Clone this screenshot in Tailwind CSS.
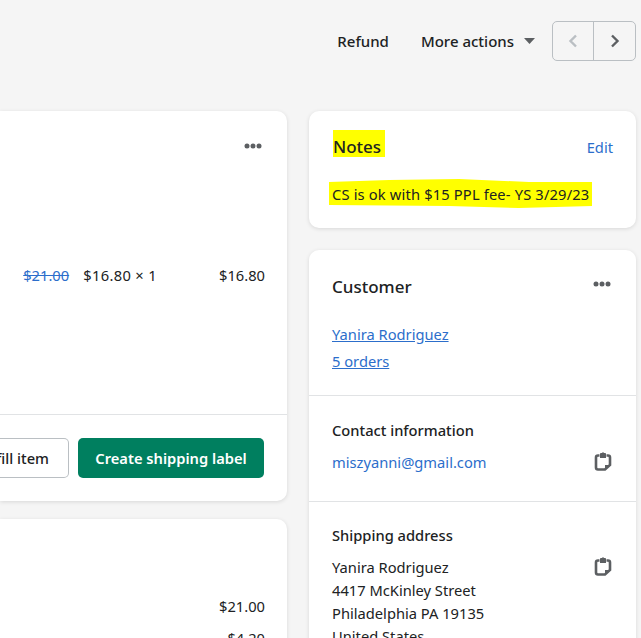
<!DOCTYPE html>
<html lang="en">
<head>
  <meta charset="UTF-8" />
  <title>Order</title>
  <script src="https://cdn.jsdelivr.net/npm/@tailwindcss/browser@4"></script>
</head>
<body class="bg-[#f5f5f5] h-[638px] w-[641px] overflow-hidden font-['Noto_Sans','Open_Sans',sans-serif] text-[14.7px] text-[#202223]">

  <!-- top actions -->
  <div class="h-[111px] flex justify-end items-start pt-[21px] pr-[5px] text-[15px]">
    <span class="h-10 flex items-center font-medium mr-8">Refund</span>
    <span class="h-10 flex items-center font-medium">More actions
      <svg class="ml-[10px] mr-[17px]" width="11" height="6" viewBox="0 0 11 6"><path d="M0 0h11L5.500 6z" fill="#5c5f62"/></svg>
    </span>
    <div class="h-10 w-[84px] flex border border-[#babfc3] rounded-[5px]">
      <span class="w-[41px] flex items-center justify-center border-r border-[#babfc3]">
        <svg width="10" height="14" viewBox="0 0 10 14"><path d="M8 1.5 2.500 7 8 12.500" fill="none" stroke="#babfc3" stroke-width="2.400"/></svg>
      </span>
      <span class="flex-1 flex items-center justify-center">
        <svg width="10" height="14" viewBox="0 0 10 14"><path d="M2 1.5 7.500 7 2 12.500" fill="none" stroke="#5c5f62" stroke-width="2.400"/></svg>
      </span>
    </div>
  </div>

  <div class="flex gap-[22px] items-start">
    <!-- left column -->
    <div class="w-[287px] flex flex-col gap-[18px]">
      <div class="h-[390px] bg-white rounded-r-[10px] shadow-[0_1px_4px_rgba(0,0,0,0.12)] flex flex-col">
        <div class="h-[303px] pr-[22px]">
          <div class="h-[70px] flex justify-end items-start pt-[32px] pr-[3px]">
            <svg width="18" height="6" viewBox="0 0 18 6" fill="#5c5f62"><circle cx="3" cy="3" r="2.500"/><circle cx="9" cy="3" r="2.500"/><circle cx="15" cy="3" r="2.500"/></svg>
          </div>
          <div class="mt-[82px] flex justify-end items-center h-6">
            <span class="text-[#2c6ecb] line-through mr-[14px]">$21.00</span>
            <span class="mr-[62px] tracking-[0.35px]">$16.80 × 1</span>
            <span>$16.80</span>
          </div>
        </div>
        <div class="flex-1 border-t border-[#e1e3e5] flex justify-end items-start gap-[9px] pt-[23px] pr-[23px]">
          <span class="h-10 w-[69px] shrink-0 flex items-center justify-end pr-[19px] bg-white border border-[#babfc3] border-l-0 rounded-r-[5px] font-medium whitespace-nowrap overflow-hidden">Fulfill item</span>
          <span class="h-10 w-[186px] shrink-0 flex items-center justify-center bg-[#007f5f] text-white rounded-[5px] font-semibold">Create shipping label</span>
        </div>
      </div>
      <div class="h-[200px] bg-white rounded-r-[10px] shadow-[0_1px_4px_rgba(0,0,0,0.12)] pr-[22px] pt-[75px] text-right">
        <p class="leading-6">$21.00</p>
        <p class="leading-6 mt-[8px]">$4.20</p>
      </div>
    </div>

    <!-- right column -->
    <div class="w-[327px] flex flex-col gap-[22px]">
      <div class="h-[117px] bg-white rounded-[10px] shadow-[0_1px_4px_rgba(0,0,0,0.12)] pl-[20px] pr-[23px] pt-[19px]">
        <div class="flex justify-between items-start h-[29px]">
          <span class="ml-[4px] w-[52px] bg-[#ffff00] text-[17px] font-medium h-[27px] leading-[34px] whitespace-nowrap overflow-hidden">Notes</span>
          <span class="text-[#2c6ecb] mt-[5px] leading-6">Edit</span>
        </div>
        <p class="mt-[19px] w-[263px] bg-[#ffff00] h-[31px] leading-[32px] pl-[3px] tracking-[0.16px] whitespace-nowrap [clip-path:polygon(0_4px,60px_2px,130px_1px,200px_4px,263px_4px,263px_28px,190px_30px,120px_28px,0_27px)]">CS is ok with $15 PPL fee- YS 3/29/23</p>
      </div>

      <div class="h-[400px] bg-white rounded-[10px] shadow-[0_1px_4px_rgba(0,0,0,0.12)]">
        <div class="h-[146px] border-b border-[#e1e3e5] pl-[23px] pr-[25px] pt-[25px]">
          <div class="flex justify-between items-start">
            <span class="text-[17px] font-medium leading-6">Customer</span>
            <svg class="mt-[6px]" width="18" height="6" viewBox="0 0 18 6" fill="#5c5f62"><circle cx="3" cy="3" r="2.500"/><circle cx="9" cy="3" r="2.500"/><circle cx="15" cy="3" r="2.500"/></svg>
          </div>
          <a class="block mt-[23px] leading-6 text-[#2c6ecb] underline">Yanira Rodriguez</a>
          <a class="block mt-[3px] leading-6 text-[#2c6ecb] underline">5 orders</a>
        </div>
        <div class="h-[106px] border-b border-[#e1e3e5] pl-[23px] pr-[24px] pt-[22px]">
          <p class="font-medium leading-6">Contact information</p>
          <div class="mt-[8px] flex justify-between items-center h-6">
            <a class="text-[#2c6ecb]">miszyanni@gmail.com</a>
            <svg width="18" height="20" viewBox="0 0 18 20"><path d="M5.500 3.500H4Q2 3.500 2 5.500V15.500Q2 17.500 4 17.500H11L16 13V5.500Q16 3.500 14 3.500H12.500" fill="none" stroke="#5c5f62" stroke-width="2.600"/><path d="M6 1.800Q6 1 7 1H8L9 0L10 1H11Q12 1 12 1.800V6H6Z" fill="#5c5f62"/><path d="M11 17V13H16Z" fill="#5c5f62"/></svg>
          </div>
        </div>
        <div class="pl-[23px] pr-[24px] pt-[21px]">
          <p class="font-medium leading-6">Shipping address</p>
          <div class="mt-[9px] flex justify-between items-start">
            <p class="leading-[23px]">Yanira Rodriguez<br />4417 McKinley Street<br />Philadelphia PA 19135<br />United States</p>
            <svg class="mt-[1px]" width="18" height="20" viewBox="0 0 18 20"><path d="M5.500 3.500H4Q2 3.500 2 5.500V15.500Q2 17.500 4 17.500H11L16 13V5.500Q16 3.500 14 3.500H12.500" fill="none" stroke="#5c5f62" stroke-width="2.600"/><path d="M6 1.800Q6 1 7 1H8L9 0L10 1H11Q12 1 12 1.800V6H6Z" fill="#5c5f62"/><path d="M11 17V13H16Z" fill="#5c5f62"/></svg>
          </div>
        </div>
      </div>
    </div>
  </div>

</body>
</html>
